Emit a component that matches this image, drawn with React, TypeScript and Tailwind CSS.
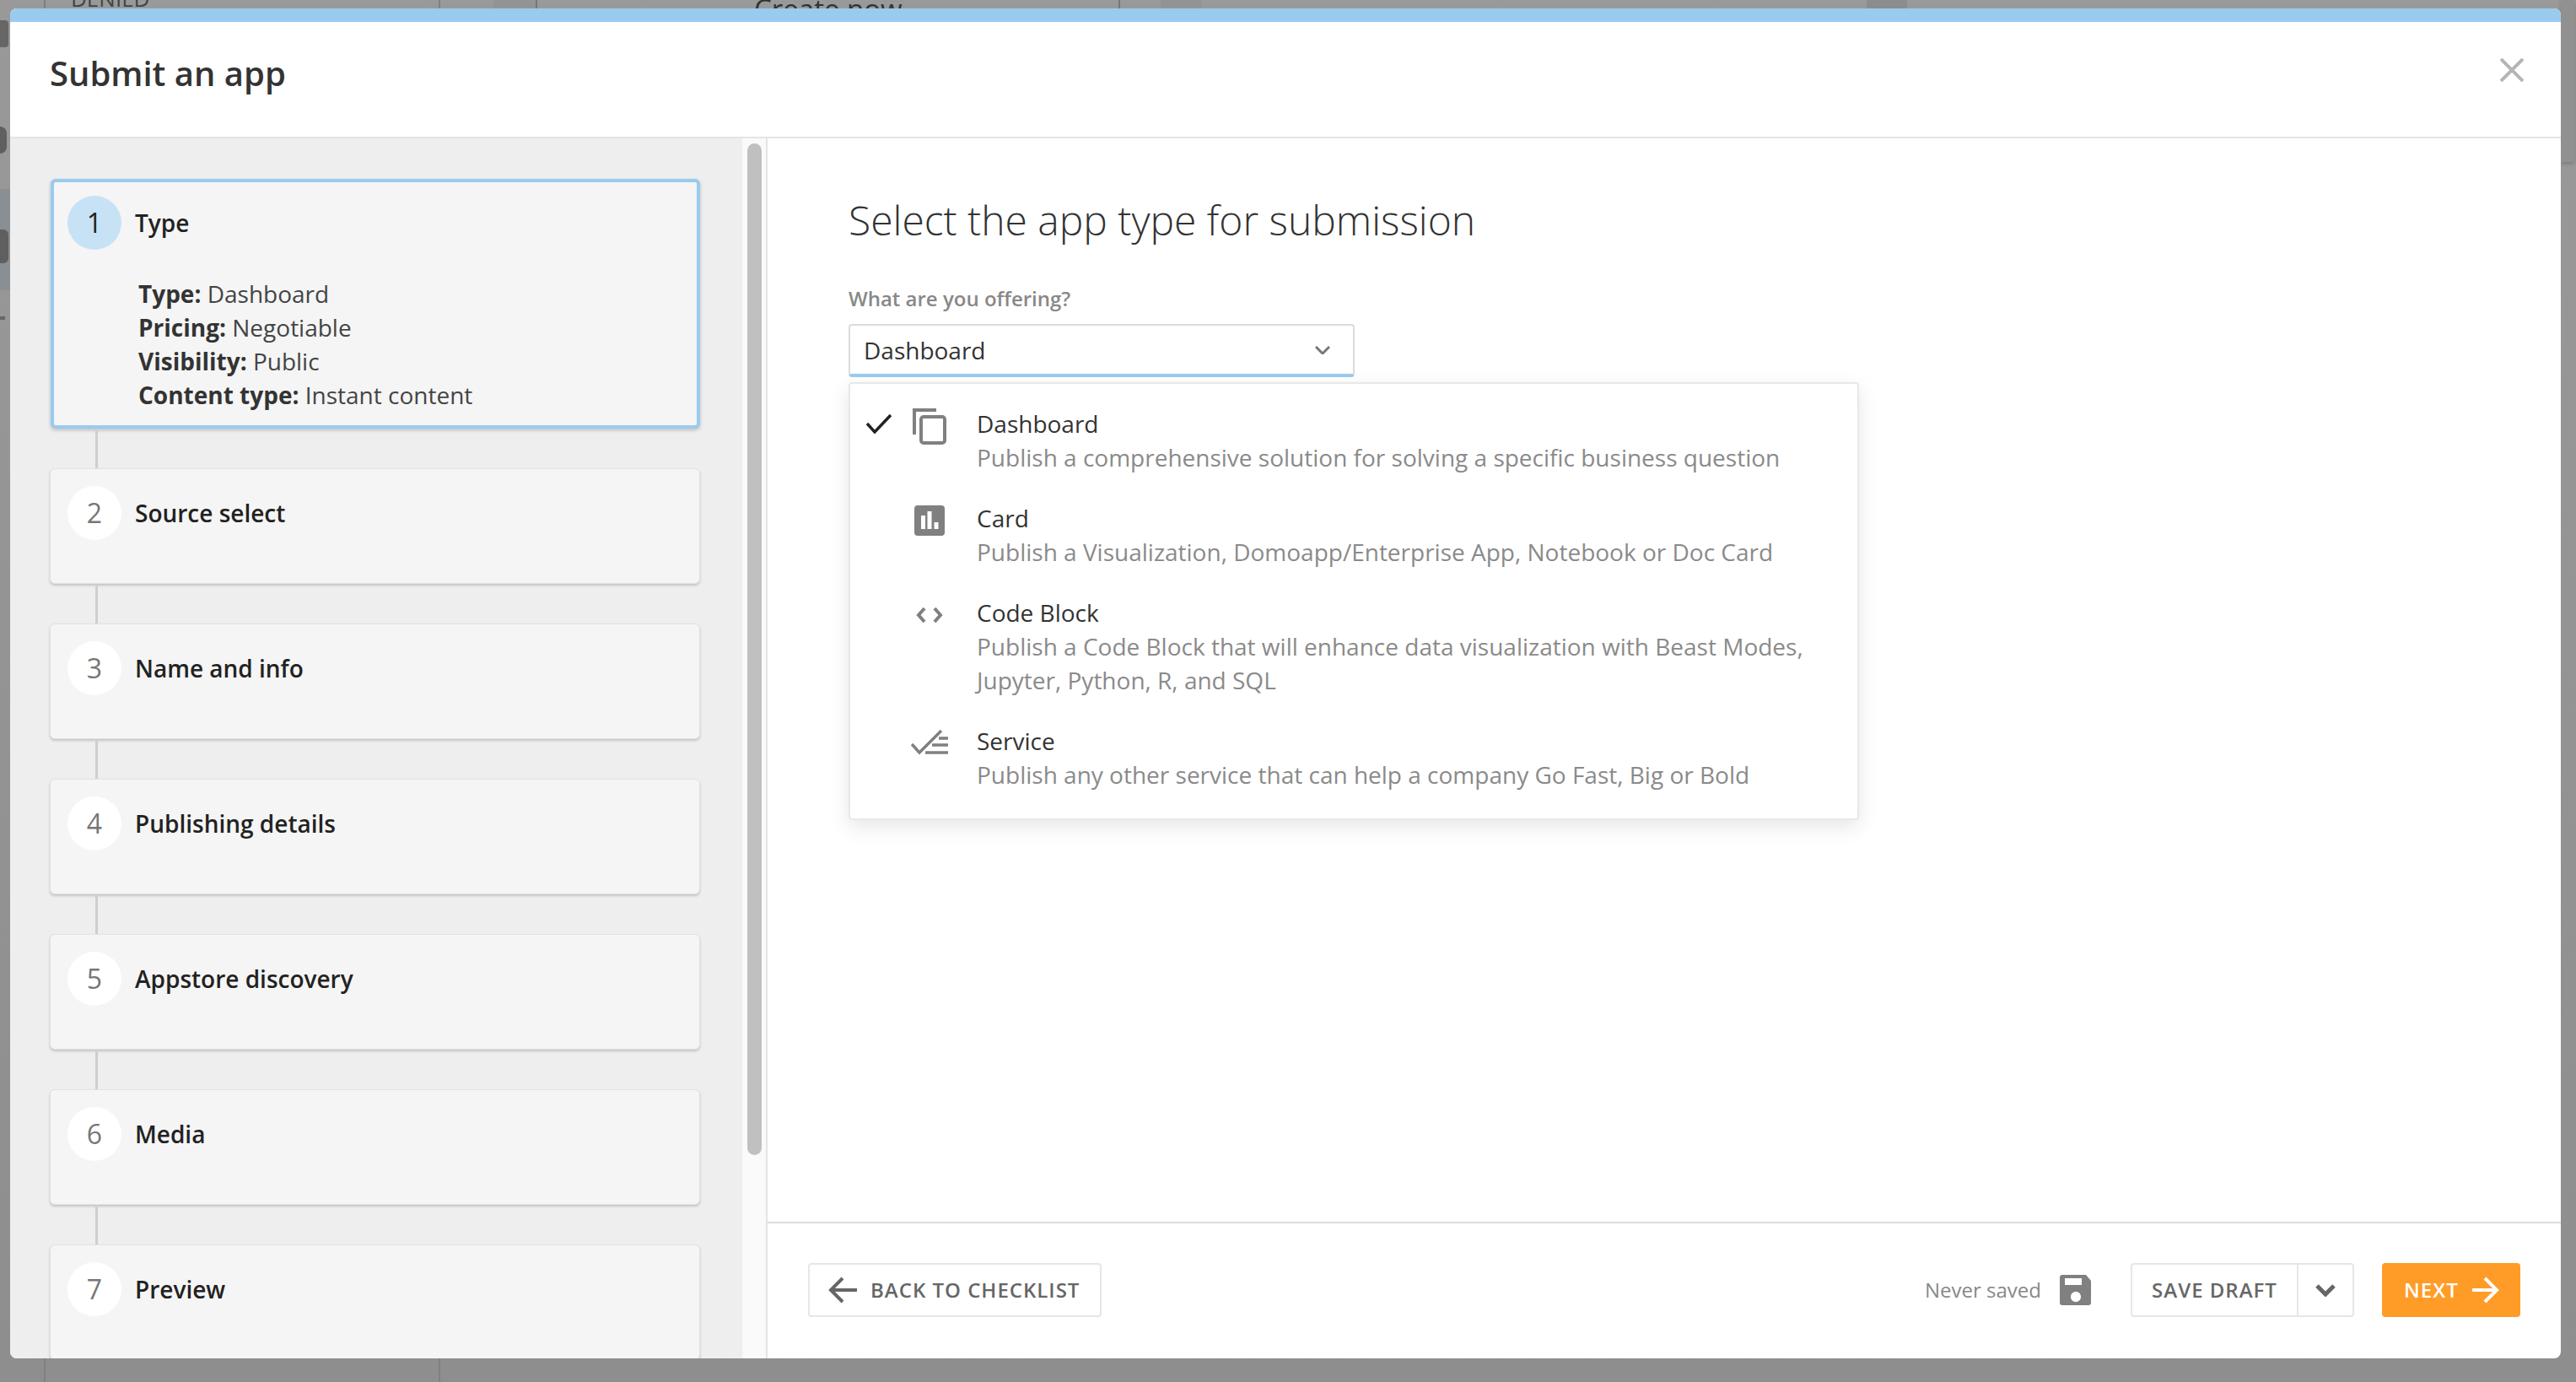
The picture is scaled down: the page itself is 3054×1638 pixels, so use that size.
import React from 'react';

const steps = [
  { n: 2, title: 'Source select' },
  { n: 3, title: 'Name and info' },
  { n: 4, title: 'Publishing details' },
  { n: 5, title: 'Appstore discovery' },
  { n: 6, title: 'Media' },
  { n: 7, title: 'Preview' },
];

const summary = [
  ['Type:', 'Dashboard'],
  ['Pricing:', 'Negotiable'],
  ['Visibility:', 'Public'],
  ['Content type:', 'Instant content'],
];

const CopyIcon = () => (
  <svg width="40" height="43" viewBox="0 0 40 43" fill="none" stroke="#808080" strokeWidth="4">
    <path d="M2 31V2h26" />
    <rect x="10" y="10" width="28" height="31" rx="3" />
  </svg>
);

const CardIcon = () => (
  <svg width="36" height="36" viewBox="0 0 36 36">
    <rect width="36" height="36" rx="4" fill="#808080" />
    <rect x="8" y="12" width="5" height="16" fill="#fff" />
    <rect x="15.5" y="7" width="5" height="21" fill="#fff" />
    <rect x="23.5" y="20" width="5" height="8" fill="#fff" />
  </svg>
);

const CodeIcon = () => (
  <svg width="32" height="20" viewBox="0 0 32 20" fill="none" stroke="#808080" strokeWidth="4">
    <path d="M10 2 3 10l7 8" />
    <path d="M22 2l7 8-7 8" />
  </svg>
);

const ServiceIcon = () => (
  <svg width="44" height="32" viewBox="0 0 44 32" fill="none" stroke="#808080" strokeWidth="3.5">
    <path d="M1 17l9 10L36 1" />
    <path d="M33 10h11M25 18h19M17 27h27" />
  </svg>
);

const options = [
  {
    title: 'Dashboard',
    desc: 'Publish a comprehensive solution for solving a specific business question',
    icon: <CopyIcon />,
    checked: true,
  },
  {
    title: 'Card',
    desc: 'Publish a Visualization, Domoapp/Enterprise App, Notebook or Doc Card',
    icon: <CardIcon />,
  },
  {
    title: 'Code Block',
    desc: 'Publish a Code Block that will enhance data visualization with Beast Modes, Jupyter, Python, R, and SQL',
    icon: <CodeIcon />,
  },
  {
    title: 'Service',
    desc: 'Publish any other service that can help a company Go Fast, Big or Bold',
    icon: <ServiceIcon />,
  },
];

const Connector = () => <div className="ml-[53px] h-[47px] w-[3px] shrink-0 bg-[#cfcfcf]" />;

export default function App() {
  return (
    <div className="relative h-[1638px] w-[3054px] overflow-hidden bg-linear-to-b from-[#999999] to-[#8e8e8e] font-['Open_Sans',sans-serif]">
      {/* dimmed page behind the modal */}
      <div className="absolute left-[52px] top-0 h-full w-[2px] bg-[#808080]" />
      <div className="absolute left-[520px] top-0 h-full w-[2px] bg-[#808080]" />
      <div className="absolute left-[585px] top-0 h-[10px] w-[50px] bg-[#939393]" />
      <div className="absolute left-[635px] top-0 h-[10px] border-l-2 border-dashed border-[#777777]" />
      <div className="absolute left-[1326px] top-0 h-[10px] border-l-2 border-dashed border-[#777777]" />
      <div className="absolute left-[1376px] top-0 h-[10px] w-[48px] bg-[#939393]" />
      <div className="absolute left-[2213px] top-0 h-[10px] w-[48px] bg-[#8c8c8c]" />
      <div className="absolute left-[84px] top-[-18px] text-[26px] leading-[32px] text-[#444444]">DENIED</div>
      <div className="absolute left-[894px] top-[-11px] text-[33px] leading-[44px] text-[#333333]">Create now</div>
      <div className="absolute left-0 top-[24px] h-[32px] w-[10px] rounded-r-[4px] bg-[#666666]" />
      <div className="absolute left-0 top-[224px] h-[120px] w-[12px] bg-[#8a8f94]" />
      <div className="absolute left-0 top-[150px] h-[32px] w-[8px] rounded-r-full bg-[#5f5f5f]" />
      <div className="absolute left-0 top-[272px] h-[40px] w-[10px] rounded-r-[6px] bg-[#5f5f5f]" />
      <div className="absolute left-0 top-[375px] h-[4px] w-[6px] bg-[#666666]" />
      <div className="absolute right-[2px] top-0 h-[192px] w-[16px] rounded-br-[4px] bg-[#919191] shadow-[0_2px_4px_rgba(0,0,0,0.2)]" />

      <div className="absolute left-[12px] top-[10px] flex h-[1600px] w-[3024px] flex-col overflow-hidden rounded-[8px] bg-white">
        <div className="h-[16px] shrink-0 bg-[#99cbef]" />
        <div className="flex h-[138px] shrink-0 items-center justify-between border-b-2 border-[#e4e4e4] pb-[14px] pl-[47px] pr-[44px]">
          <h1 className="text-[40px] font-semibold leading-[56px] text-[#333333]">Submit an app</h1>
          <svg width="28" height="28" viewBox="0 0 28 28" stroke="#b5b5b5" strokeWidth="4" className="-mt-[8px]">
            <path d="M1 1l26 26M27 1L1 27" />
          </svg>
        </div>

        <div className="flex min-h-0 flex-1">
          <div className="flex w-[868px] shrink-0 flex-col overflow-hidden bg-[#eeeeee] pl-[48px] pt-[48px]">
            <div className="h-[296px] w-[770px] shrink-0 rounded-[6px] border-4 border-[#99cbef] bg-[#f5f5f5] pl-[16px] pt-[16px] shadow-[0_2px_4px_rgba(0,0,0,0.2)]">
              <div className="flex items-center">
                <div className="flex h-[64px] w-[64px] items-center justify-center rounded-full bg-[#c8e2f5] text-[32px] text-[#222222]">
                  1
                </div>
                <div className="ml-[16px] text-[28px] font-semibold text-[#222222]">Type</div>
              </div>
              <div className="ml-[84px] mt-[32px] text-[28px] leading-[40px] text-[#444444]">
                {summary.map(([k, v]) => (
                  <div key={k}>
                    <span className="font-bold text-[#333333]">{k}</span> {v}
                  </div>
                ))}
              </div>
            </div>
            {steps.map((s) => (
              <React.Fragment key={s.n}>
                <Connector />
                <div className="-ml-px flex h-[137px] w-[771px] shrink-0 items-start rounded-[6px] border border-[#e2e2e2] bg-[#f5f5f5] pl-[20px] pt-[20px] shadow-[0_2px_3px_rgba(0,0,0,0.18)]">
                  <div className="flex items-center">
                    <div className="flex h-[64px] w-[64px] items-center justify-center rounded-full bg-white text-[32px] text-[#777777]">
                      {s.n}
                    </div>
                    <div className="ml-[16px] text-[28px] font-semibold text-[#222222]">{s.title}</div>
                  </div>
                </div>
              </React.Fragment>
            ))}
          </div>

          <div className="flex w-[28px] shrink-0 justify-center bg-[#fafafa] pt-[6px]">
            <div className="h-[1199px] w-[17px] rounded-full bg-[#c0c0c0]" />
          </div>

          <div className="flex min-w-0 flex-1 flex-col border-l-2 border-[#e4e4e4]">
            <div className="relative flex-1 pl-[96px] pt-[65px]">
              <h2 className="text-[48px] font-light leading-[64px] text-[#333333]">Select the app type for submission</h2>
              <label className="mt-[45px] block text-[24px] font-semibold leading-[32px] text-[#888888]">
                What are you offering?
              </label>
              <div className="relative mt-[14px] w-[600px]">
                <div className="flex h-[63px] items-center justify-between rounded-[4px] border-2 border-b-4 border-[#dcdcdc] border-b-[#99cbef] pl-[16px] pr-[27px] text-[28px] text-[#333333]">
                  <span>Dashboard</span>
                  <svg width="18" height="10" viewBox="0 0 18 10" fill="none" stroke="#777777" strokeWidth="3">
                    <path d="M1 1l8 8 8-8" />
                  </svg>
                </div>
                <div className="absolute left-0 top-[69px] flex w-[1198px] flex-col gap-[32px] rounded-[4px] border-2 border-[#e8e8e8] bg-white pb-[32px] pl-[18px] pt-[27px] shadow-[0_8px_24px_rgba(0,0,0,0.1)]">
                  {options.map((o) => (
                    <div key={o.title} className="flex items-start">
                      <div className="flex h-[40px] w-[32px] shrink-0 items-center justify-center">
                        {o.checked && (
                          <svg width="32" height="24" viewBox="0 0 32 24" fill="none" stroke="#222222" strokeWidth="3.5">
                            <path d="M2 12l9 10L30 2" />
                          </svg>
                        )}
                      </div>
                      <div className="ml-[22px] mt-[3px] flex h-[40px] w-[44px] shrink-0 items-center justify-center">{o.icon}</div>
                      <div className="ml-[34px] w-[1012px] text-[28px] leading-[40px]">
                        <div className="text-[#333333]">{o.title}</div>
                        <div className="text-[#8a8a8a]">{o.desc}</div>
                      </div>
                    </div>
                  ))}
                </div>
              </div>
            </div>

            <div className="flex h-[162px] shrink-0 items-center justify-between border-t-2 border-[#dcdcdc] pb-[2px] pl-[48px] pr-[48px]">
              <button className="flex h-[64px] w-[348px] items-center rounded-[4px] border-2 border-[#e6e6e6] pl-[22px] text-[24px] font-semibold tracking-[1px] text-[#666666]">
                <svg width="34" height="32" viewBox="0 0 34 32" fill="none" stroke="#666666" strokeWidth="4" className="shrink-0">
                  <path d="M34 16H3M17 2 3 16l14 14" />
                </svg>
                <span className="ml-[16px]">BACK TO CHECKLIST</span>
              </button>

              <div className="flex items-center">
                <span className="text-[24px] text-[#888888]">Never saved</span>
                <svg width="37" height="36" viewBox="0 0 37 36" className="ml-[22px]">
                  <path
                    fillRule="evenodd"
                    fill="#808080"
                    d="M3 0h28l6 7v26a3 3 0 0 1-3 3H3a3 3 0 0 1-3-3V3a3 3 0 0 1 3-3zM6 4v8h20V4zM19 20c-3.500 0-6 2.500-6 6s2.500 6 6 6 6-2.500 6-6-2.500-6-6-6z"
                  />
                </svg>
                <div className="ml-[47px] flex h-[64px] w-[265px] rounded-[4px] border-2 border-[#e6e6e6]">
                  <div className="flex w-[197px] items-center justify-center border-r-2 border-[#e6e6e6] text-[24px] font-semibold tracking-[1px] text-[#666666]">
                    SAVE DRAFT
                  </div>
                  <div className="flex flex-1 items-center justify-center">
                    <svg width="24" height="15" viewBox="0 0 24 15" fill="none" stroke="#666666" strokeWidth="5">
                      <path d="M2 2l10 10L22 2" />
                    </svg>
                  </div>
                </div>
                <button className="ml-[33px] flex h-[64px] w-[164px] items-center rounded-[4px] bg-[#ff9c28] pl-[26px] text-[24px] font-semibold tracking-[1px] text-white">
                  <span>NEXT</span>
                  <svg width="32" height="32" viewBox="0 0 32 32" fill="none" stroke="#ffffff" strokeWidth="4" className="ml-[16px]">
                    <path d="M0 16h29M15 2l14 14-14 14" />
                  </svg>
                </button>
              </div>
            </div>
          </div>
        </div>
      </div>
    </div>
  );
}
